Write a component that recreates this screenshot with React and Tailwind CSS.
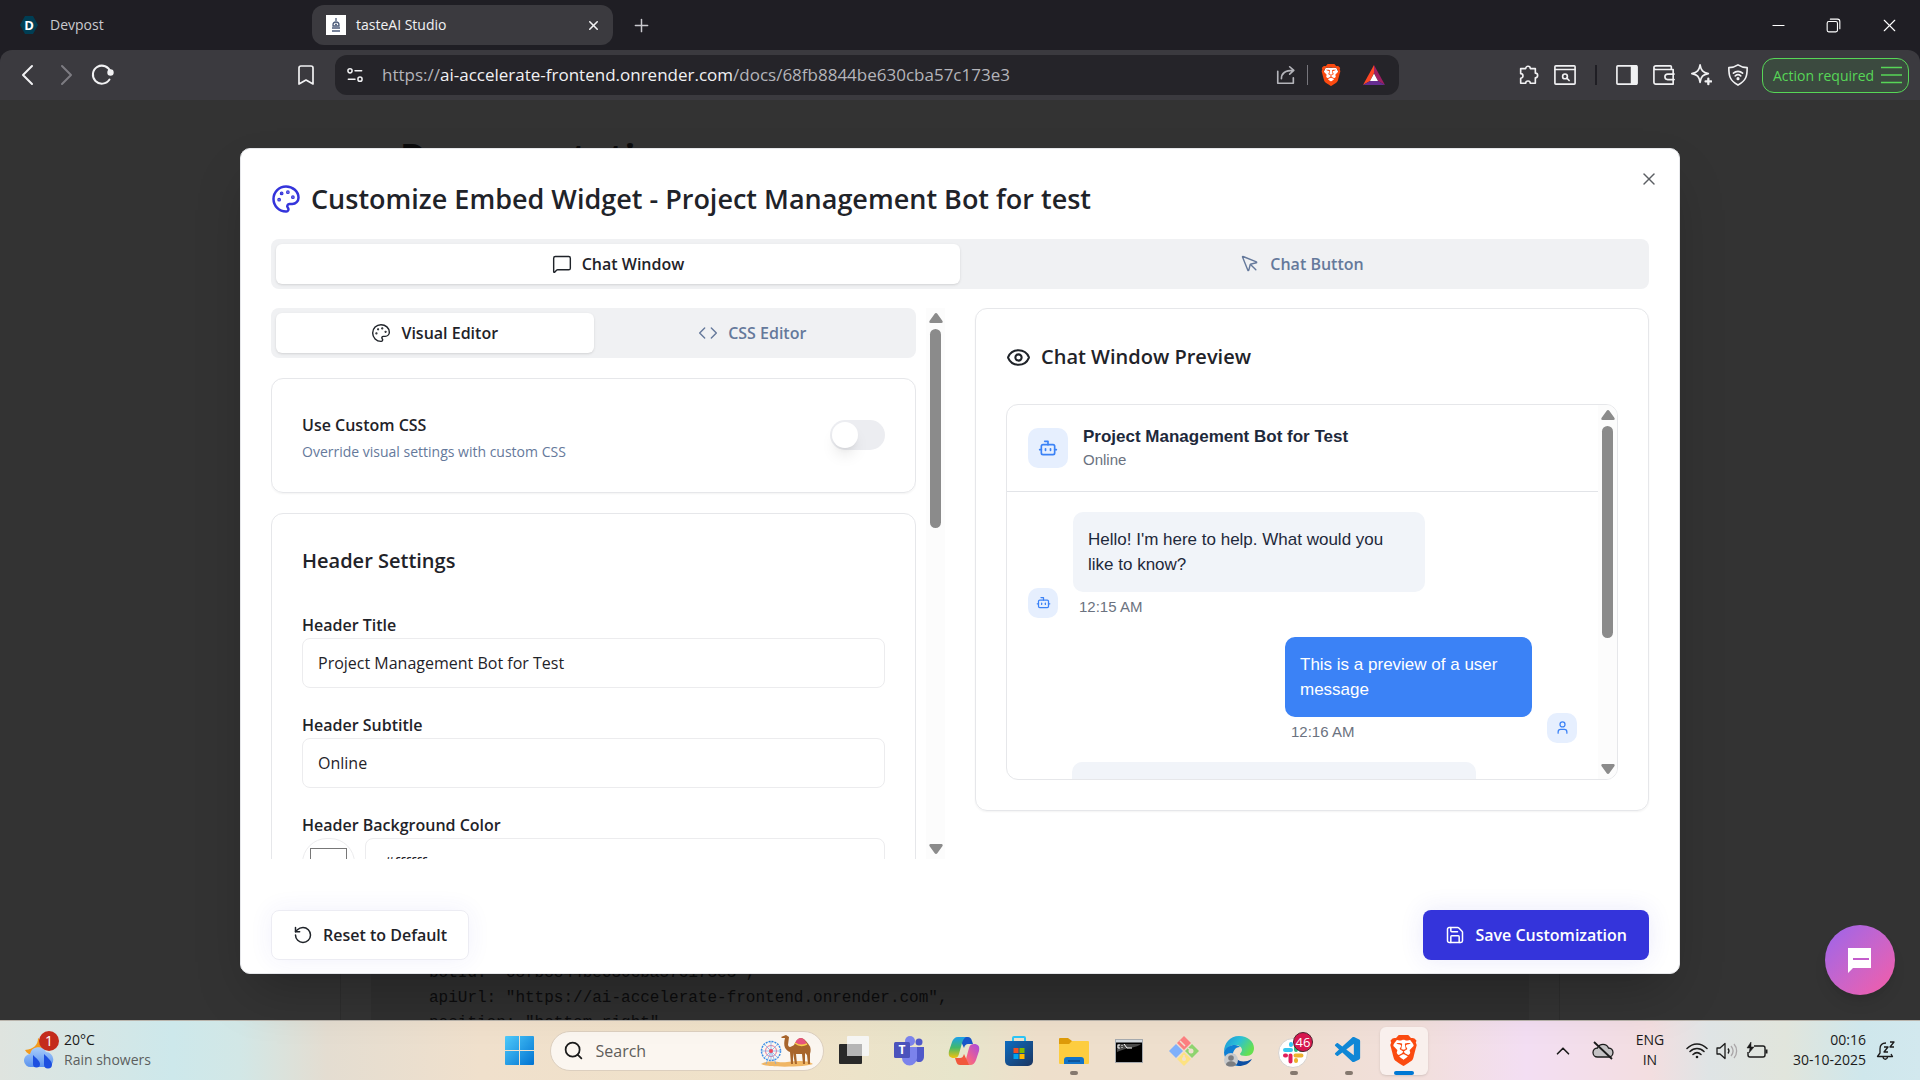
import {
  Bookmark,
  Bot,
  ChevronUp,
  Code,
  Eye,
  MessageSquare,
  Minus,
  MousePointer,
  Palette,
  Plus,
  RotateCcw,
  Save,
  Search,
  User,
  X,
} from 'lucide-react'
import { SiBrave } from 'react-icons/si'
import { VscVscode } from 'react-icons/vsc'

/* ---------- Browser chrome icons ---------- */

function ChromeIcon({ children, size = 22, className = '' }) {
  return (
    <svg
      width={size}
      height={size}
      viewBox="0 0 24 24"
      fill="none"
      stroke="currentColor"
      strokeWidth="1.8"
      strokeLinecap="round"
      strokeLinejoin="round"
      className={`shrink-0 ${className}`}
    >
      {children}
    </svg>
  )
}

function BraveLogo({ size }) {
  return (
    <span className="grid place-items-center">
      <svg width={size} height={size} viewBox="0 0 24 24" className="col-start-1 row-start-1">
        <path d="M6 4h12l2 5-2.500 9L12 22l-5.500-4L4 9z" fill="#fff" />
      </svg>
      <SiBrave size={size} className="col-start-1 row-start-1 text-[#fb4a10]" />
    </span>
  )
}

function BatLogo() {
  return (
    <svg width="22" height="20" viewBox="0 0 22 20">
      <path d="M11 0 0 20l7-4 4-8z" fill="#ff4724" />
      <path d="M11 0v8l4 8 7 4z" fill="#9e1f63" />
      <path d="M0 20h22l-7-4H7z" fill="#662d91" />
      <path d="M11 8.500 7 16h8z" fill="#fff" />
    </svg>
  )
}

function TabStrip() {
  return (
    <div className="flex h-[50px] items-center text-[14px] text-[#c9c9ce]">
      <div className="flex w-[312px] items-center gap-3 pl-5">
        <svg width="18" height="18" viewBox="0 0 18 18">
          <path d="M5 0h8l5 9-5 9H5L0 9z" fill="#003e54" />
          <text x="9" y="14" textAnchor="middle" fontSize="13" fontWeight="700" fill="#fff">
            D
          </text>
        </svg>
        <span className="pb-0.5">Devpost</span>
      </div>
      <div className="flex h-10 w-[301px] items-center rounded-xl bg-[#3b3a3f] pl-3.5 pr-3 text-[#f1f1f3]">
        <svg width="20" height="20" viewBox="0 0 20 20">
          <rect width="20" height="20" fill="#fff" />
          <path d="M10 3v3M7 10a3 3 0 1 1 6 0v1H7zM6 13h8M6 16h8" stroke="#4b5a78" fill="none" strokeWidth="1.300" />
          <circle cx="10" cy="9.500" r="1" fill="#4b5a78" />
        </svg>
        <span className="ml-2.5 flex-1 pb-0.5">tasteAI Studio</span>
        <button type="button" aria-label="Close tab">
          <X size={15} strokeWidth={2.5} />
        </button>
      </div>
      <button type="button" aria-label="New tab" className="ml-[18px]">
        <Plus size={21} strokeWidth={1.7} />
      </button>
      <div className="ml-auto flex items-center gap-9 pr-5 text-white">
        <button type="button" aria-label="Minimize">
          <Minus size={19} strokeWidth={1.4} />
        </button>
        <button type="button" aria-label="Restore">
          <ChromeIcon size={19}>
            <rect x="4" y="7" width="13" height="13" rx="2" strokeWidth="1.400" />
            <path d="M8 4h9a3 3 0 0 1 3 3v9" strokeWidth="1.400" />
          </ChromeIcon>
        </button>
        <button type="button" aria-label="Close">
          <X size={21} strokeWidth={1.3} />
        </button>
      </div>
    </div>
  )
}

function Toolbar() {
  return (
    <div className="flex h-[50px] items-center rounded-t-xl bg-[#3b3a3f] pr-[11px] text-[#f1f1f3]">
      <div className="flex w-[335px] shrink-0 items-center pl-4 pr-[17px]">
        <button type="button" aria-label="Back">
          <ChromeIcon size={24}>
            <path d="m16 3-9 9 9 9" strokeWidth="2" />
          </ChromeIcon>
        </button>
        <button type="button" aria-label="Forward" className="ml-3.5 text-[#7d7c82]">
          <ChromeIcon size={24}>
            <path d="m8 3 9 9-9 9" strokeWidth="2" />
          </ChromeIcon>
        </button>
        <button type="button" aria-label="Reload" className="ml-3">
          <ChromeIcon size={24}>
            <path d="M19.500 16.500A9 9 0 1 1 20.500 9" strokeWidth="2" />
            <circle cx="20.500" cy="9.500" r="2.300" fill="currentColor" />
          </ChromeIcon>
        </button>
        <button type="button" aria-label="Bookmark" className="ml-auto">
          <Bookmark size={24} strokeWidth={1.7} />
        </button>
      </div>

      <div className="mr-[118px] flex h-10 min-w-0 flex-1 items-center rounded-xl bg-[#252429] pl-2.5 pr-3.5">
        <ChromeIcon size={20}>
          <circle cx="6" cy="7" r="2.500" />
          <path d="M12 7h8M4 17h8" />
          <circle cx="18" cy="17" r="2.500" />
        </ChromeIcon>
        <span className="ml-[17px] min-w-0 flex-1 truncate text-[17px] leading-6 text-[#b4b4ba]">
          https://<span className="text-[#f1f1f3]">ai-accelerate-frontend.onrender.com</span>
          /docs/68fb8844be630cba57c173e3
        </span>
        <ChromeIcon className="text-[#b4b4ba]">
          <path d="M3 8v13h17v-6" />
          <path d="M7 16c0-6 4-9 13-9M16 3l4.500 4L16 11" />
        </ChromeIcon>
        <span className="ml-2.5 h-5 w-px bg-[#77767c]" />
        <span className="ml-3">
          <BraveLogo size={22} />
        </span>
        <span className="ml-[21px]">
          <BatLogo />
        </span>
      </div>

      <div className="flex shrink-0 items-center gap-[15px]">
        <ChromeIcon>
          <path d="M9.500 5a2.500 2.500 0 0 1 5 0H20v5a2.500 2.500 0 0 1 0 5v6h-5.500a2.500 2.500 0 0 0-5 0H4v-5.500a2.500 2.500 0 0 0 0-5V5z" />
        </ChromeIcon>
        <ChromeIcon>
          <rect x="1" y="2" width="22" height="20" rx="1" />
          <path d="M1 6h22" />
          <circle cx="12" cy="13.500" r="2.600" />
          <path d="m14 15.500 2.500 2.500" />
        </ChromeIcon>
        <span className="mx-1 h-5 w-0.5 bg-[#1f1e24]" />
        <ChromeIcon>
          <rect x="1" y="2" width="22" height="20" rx="1" />
          <path d="M17 2h5v20h-5z" fill="currentColor" />
        </ChromeIcon>
        <ChromeIcon>
          <path d="M20 6V3a1 1 0 0 0-1-1H3a2 2 0 0 0 0 4h19v16H3a2 2 0 0 1-2-2V4" />
          <path d="M23 11h-7a3 3 0 0 0 0 6h7" />
        </ChromeIcon>
        <ChromeIcon>
          <path d="M11 1c1 6 3 8 9 9.500-6 1-8 3-9 9.500-1-6.500-3-8.500-9-9.500C8 9 10 7 11 1z" />
          <path d="M20 16v6M17 19h6" strokeWidth="2.500" />
        </ChromeIcon>
        <ChromeIcon>
          <path d="M12 1c3 2 6 3 10 3 0 9-1 14-10 19C3 18 2 13 2 4c4 0 7-1 10-3z" />
          <path d="M7 10a7.500 7.500 0 0 1 10 0M9 13a4.500 4.500 0 0 1 6 0" />
          <circle cx="12" cy="16" r=".8" fill="currentColor" />
        </ChromeIcon>
        <button
          type="button"
          className="-ml-0.5 flex h-[35px] w-[147px] items-center justify-between rounded-xl border border-[#57d657] bg-[#3b4a3f] pl-2.5 pr-1.5 text-[14px] whitespace-nowrap text-[#57d657]"
        >
          Action required
          <svg width="21" height="18" viewBox="0 0 21 18" stroke="currentColor" strokeWidth="1.600">
            <path d="M0 1.500h21M0 9h21M0 16.500h21" />
          </svg>
        </button>
      </div>
    </div>
  )
}

/* ---------- Page behind the dialog ---------- */

function DocsPage() {
  return (
    <main className="flex h-full justify-center overflow-hidden pr-5">
      <div className="flex w-full max-w-[1220px] flex-col">
        <h1 className="px-[60px] pt-8 text-[36px] leading-[50px] font-bold text-[#0b0b0c]">Documentation</h1>
        <div className="mt-10 -mb-4 flex flex-1 flex-col justify-end border-x border-[#2d2d2d] px-[30px]">
          <pre className="bg-[#2f2f2f] px-[58px] pt-5 font-['Liberation_Mono',monospace] text-[16px] leading-[25px] text-[#0c0c0d]">
            {`botId: "68fb8844be630cba57c173e3",
apiUrl: "https://ai-accelerate-frontend.onrender.com",
position: "bottom-right",`}
          </pre>
        </div>
      </div>
    </main>
  )
}

/* ---------- Dialog ---------- */

function TabButton({ icon: Icon, label, active }) {
  return (
    <button
      type="button"
      role="tab"
      aria-selected={active}
      className={`flex flex-1 items-center justify-center gap-2.5 rounded-md text-[16px] font-semibold ${
        active ? 'bg-white text-[#1f2329] shadow-sm' : 'text-[#65799b]'
      }`}
    >
      <Icon size={20} strokeWidth={1.7} />
      {label}
    </button>
  )
}

function TabBar({ tabs }) {
  return (
    <div role="tablist" className="flex h-[50px] shrink-0 rounded-lg bg-[#f0f1f3] p-[5px]">
      {tabs.map((tab) => (
        <TabButton key={tab.label} {...tab} />
      ))}
    </div>
  )
}

function ScrollBar({ thumb }) {
  return (
    <div className="flex w-[19px] shrink-0 flex-col items-center bg-[#fcfcfc] py-[5px] text-[#8b8b8b]">
      <svg width="14" height="10" viewBox="0 0 14 10" fill="currentColor">
        <path d="M7 0c.6 0 1 .3 1.300.8L13.500 8c.5 1 .1 2-1 2h-11c-1.100 0-1.500-1-1-2L5.700.8C6 .3 6.400 0 7 0z" />
      </svg>
      <div className="mt-1.5 w-full flex-1 px-1">
        <div className={`rounded-full bg-[#8b8b8b] ${thumb}`} />
      </div>
      <svg width="14" height="10" viewBox="0 0 14 10" fill="currentColor">
        <path d="M7 10c.6 0 1-.3 1.300-.8L13.500 2c.5-1 .1-2-1-2h-11C.4 0 0 1 .5 2l5.200 7.200c.3.5.7.8 1.300.8z" />
      </svg>
    </div>
  )
}

function TextField({ id, label, value }) {
  return (
    <div className="flex flex-col">
      <label htmlFor={id} className="text-[16px] leading-[25px] font-semibold">
        {label}
      </label>
      <input
        id={id}
        type="text"
        defaultValue={value}
        className="h-[50px] rounded-lg border border-[#ececee] px-[15px] text-[16px]"
      />
    </div>
  )
}

function EditorPane() {
  return (
    <div className="flex min-h-0 flex-1 gap-2.5 overflow-hidden">
      <div className="flex min-w-0 flex-1 flex-col gap-5 overflow-hidden">
        <TabBar
          tabs={[
            { icon: Palette, label: 'Visual Editor', active: true },
            { icon: Code, label: 'CSS Editor', active: false },
          ]}
        />

        <div className="flex h-[115px] shrink-0 items-center justify-between rounded-xl border border-[#e6e7ea] px-[30px] shadow-xs">
          <div className="flex flex-col pt-1.5">
            <label htmlFor="use-custom-css" className="text-[16px] leading-[27px] font-semibold">
              Use Custom CSS
            </label>
            <p className="text-[14px] leading-[25px] text-[#65799b]">Override visual settings with custom CSS</p>
          </div>
          <input
            id="use-custom-css"
            type="checkbox"
            role="switch"
            className="h-[30px] w-[55px] appearance-none rounded-full bg-[#ecedf1] p-0.5 before:block before:size-[26px] before:rounded-full before:bg-white before:shadow-lg"
          />
        </div>

        <div className="flex shrink-0 flex-col rounded-xl border border-[#e6e7ea] px-[30px] pt-[30px] pb-[30px]">
          <h3 className="text-[20px] leading-[34px] font-semibold">Header Settings</h3>
          <div className="mt-[35px] flex flex-col gap-[25px]">
            <TextField id="header-title" label="Header Title" value="Project Management Bot for Test" />
            <TextField id="header-subtitle" label="Header Subtitle" value="Online" />
            <div className="flex flex-col">
              <label htmlFor="header-bg" className="text-[16px] leading-[25px] font-semibold">
                Header Background Color
              </label>
              <div className="flex gap-2.5">
                <input
                  id="header-bg"
                  type="color"
                  defaultValue="#ffffff"
                  className="h-[50px] w-[53px] rounded-full border border-[#ececee] bg-white p-[5px]"
                />
                <input
                  type="text"
                  aria-label="Header background hex"
                  defaultValue="#ffffff"
                  className="h-[50px] min-w-0 flex-1 rounded-lg border border-[#ececee] px-[18px] text-[16px]"
                />
              </div>
            </div>
          </div>
        </div>
      </div>
      <ScrollBar thumb="h-[199px]" />
    </div>
  )
}

function Avatar({ icon: Icon, large }) {
  return (
    <span
      className={`grid shrink-0 place-items-center rounded-[10px] bg-[#e6effe] text-[#3b82f6] ${
        large ? 'size-10' : 'size-[30px]'
      }`}
    >
      <Icon size={large ? 20 : 15} />
    </span>
  )
}

function ChatPreview() {
  return (
    <div className="flex h-[376px] overflow-hidden rounded-xl border border-[#e6e7ea] font-['Liberation_Sans',Arial,sans-serif]">
      <div className="flex min-w-0 flex-1 flex-col overflow-hidden">
        <div className="flex h-[87px] shrink-0 items-center gap-[15px] border-b border-[#e2e4e8] px-[21px]">
          <Avatar icon={Bot} large />
          <div>
            <div className="text-[17px] leading-6 font-bold text-[#1e293b]">Project Management Bot for Test</div>
            <div className="text-[15px] leading-[22px] text-[#6b7280]">Online</div>
          </div>
        </div>

        <div className="flex flex-col gap-[19px] px-[21px] pt-5">
          <div className="flex items-end gap-[15px]">
            <Avatar icon={Bot} />
            <div>
              <p className="w-[352px] rounded-[10px] bg-[#f1f4f9] px-[15px] py-[15px] text-[17px] leading-[25px] text-[#1e293b]">
                Hello! I'm here to help. What would you like to know?
              </p>
              <p className="mt-1 pl-1.5 text-[15px] leading-[22px] text-[#6b7280]">12:15 AM</p>
            </div>
          </div>

          <div className="flex items-end justify-end gap-[15px]">
            <div>
              <p className="w-[247px] rounded-[10px] bg-[#3b82f6] px-[15px] py-[15px] text-[17px] leading-[25px] text-white">
                This is a preview of a user message
              </p>
              <p className="mt-1 pl-1.5 text-[15px] leading-[22px] text-[#6b7280]">12:16 AM</p>
            </div>
            <Avatar icon={User} />
          </div>

          <div className="ml-[44px] h-20 w-[404px] rounded-[10px] bg-[#f1f4f9]" />
        </div>
      </div>
      <ScrollBar thumb="h-[212px]" />
    </div>
  )
}

function CustomizeDialog() {
  return (
    <div
      role="dialog"
      aria-labelledby="dialog-title"
      className="relative flex h-[90%] w-3/4 flex-col rounded-[10px] border border-[#e6e7ea] bg-white px-[30px] pt-[30px] pb-[13px] text-[#1f2329] shadow-2xl"
    >
      <button type="button" aria-label="Close dialog" className="absolute top-5 right-5 text-[#5b5e63]">
        <X size={20} strokeWidth={1.7} />
      </button>

      <h2 id="dialog-title" className="flex h-10 shrink-0 items-center gap-2.5 text-[27px] font-semibold">
        <Palette size={30} className="text-[#3434db]" />
        Customize Embed Widget - Project Management Bot for test
      </h2>

      <div className="mt-5 flex flex-col">
        <TabBar
          tabs={[
            { icon: MessageSquare, label: 'Chat Window', active: true },
            { icon: MousePointer, label: 'Chat Button', active: false },
          ]}
        />
      </div>

      <div className="mt-[19px] grid min-h-0 flex-1 grid-cols-2 grid-rows-1 gap-[30px]">
        <div className="flex min-h-0">
          <EditorPane />
        </div>
        <section className="flex flex-col self-start rounded-xl border border-[#e6e7ea] p-[30px] shadow-xs">
          <h3 className="mb-7 flex h-[37px] items-center gap-2.5 text-[20px] font-semibold">
            <Eye size={25} />
            Chat Window Preview
          </h3>
          <ChatPreview />
        </section>
      </div>

      <div className="mt-[51px] flex shrink-0 items-center justify-between text-[16px] font-semibold">
        <button
          type="button"
          className="flex h-[50px] items-center gap-2.5 rounded-lg border border-[#ececf3] px-[21px] shadow-[0_0_24px_rgba(52,52,219,0.07)]"
        >
          <RotateCcw size={20} strokeWidth={1.8} />
          Reset to Default
        </button>
        <button
          type="button"
          className="flex h-[50px] items-center gap-2.5 rounded-lg bg-[#3434db] px-[22px] text-white shadow-[0_0_24px_rgba(52,52,219,0.1)]"
        >
          <Save size={20} strokeWidth={1.8} />
          Save Customization
        </button>
      </div>
    </div>
  )
}

/* ---------- Taskbar ---------- */

function WeatherIcon() {
  return (
    <svg width="36" height="38" viewBox="0 0 36 38">
      <defs>
        <linearGradient id="cloud" x1="0" y1="0" x2="0" y2="1">
          <stop offset="0" stopColor="#a9cdfb" />
          <stop offset="1" stopColor="#5b93ee" />
        </linearGradient>
      </defs>
      <path d="M14 7c0 7-4 11-13 12 3 6 12 7 16 1s1-11-3-13z" fill="#f39b1d" />
      <path d="M7 36a6.500 6.500 0 0 1-1-13 8.500 8.500 0 0 1 16-2 7.700 7.700 0 0 1 2 15z" fill="url(#cloud)" />
      <path d="M9 24c4 4 7 6 7 9a3.500 3.500 0 0 1-7 0zM20 23c4 4 8 7 8 10.500a4 4 0 0 1-8 0z" fill="#1d4fe0" />
      <circle cx="25" cy="10" r="10" fill="#c42b1c" />
      <text x="25" y="15" textAnchor="middle" fontSize="14" fill="#fff">
        1
      </text>
    </svg>
  )
}

function WindowsLogo() {
  return (
    <svg width="30" height="30" viewBox="0 0 30 30">
      <defs>
        <linearGradient id="win" x1="0" y1="0" x2="1" y2="1">
          <stop offset="0" stopColor="#4fcbfb" />
          <stop offset="1" stopColor="#0072d1" />
        </linearGradient>
      </defs>
      <path d="M0 1a1 1 0 0 1 1-1h13v14H0zM15 0h13a1 1 0 0 1 1 1v13H15zM0 15h14v14H1a1 1 0 0 1-1-1zM15 15h14v13a1 1 0 0 1-1 1H15z" fill="url(#win)" />
    </svg>
  )
}

function CamelArt() {
  return (
    <svg width="56" height="34" viewBox="0 0 56 34" fill="none">
      <path d="M2 30c8-5 16-1 26-2s20-2 26 2c-6 3-46 4-52 0z" fill="#f0b664" />
      <circle cx="12" cy="17" r="9.500" stroke="#3d8fe8" strokeWidth="1.500" strokeDasharray="2 1" />
      <circle cx="12" cy="17" r="5.500" stroke="#e9799a" />
      <path d="M12 7v20M2 17h20M5 10l14 14M19 10 5 24M12 17l-5 13M12 17l5 13" stroke="#6ea9ec" strokeWidth=".7" />
      <circle cx="12" cy="17" r="2" fill="#f0485e" />
      <path d="M22 3l5-2 3 2-1 8c1 3 3 2 6 0 2-4 4-7 7-7s6 4 8 7c2 2 2 6 1 9v10h-2l-1-9-2-2v11h-2l-1-10h-6l1 10h-2l-2-11v11h-2l-1-12c-5-2-7-6-5-14l-3 0z" fill="#a8652c" />
      <path d="M36 9c2-4 4-5 6-5s4 2 6 6c-4 2-8 2-12-1z" fill="#e8557e" />
      <path d="M36 9c4 3 8 3 12 1" stroke="#f7d04a" strokeWidth="1.500" />
    </svg>
  )
}

function TaskViewIcon() {
  return (
    <svg width="32" height="32" viewBox="0 0 32 32">
      <rect x="1" y="9" width="23" height="20" rx="1" fill="#292929" />
      <rect x="9" y="1" width="22" height="20" rx="1" fill="#f6f6f6" opacity=".95" />
      <path d="M9 9h15v12H9z" fill="#b5b5b5" />
    </svg>
  )
}

function TeamsIcon() {
  return (
    <svg width="32" height="32" viewBox="0 0 32 32">
      <circle cx="17" cy="6" r="5" fill="#7b83eb" />
      <circle cx="26" cy="7" r="3.500" fill="#5059c9" />
      <path d="M22 12h9v9c0 4-2 6-5 6s-4-2-4-5z" fill="#5059c9" />
      <path d="M9 12h15v11a7.500 7.500 0 0 1-15 0z" fill="#7b83eb" />
      <rect x="1" y="7" width="16" height="16" rx="1.500" fill="#4b53bc" />
      <text x="9" y="19" textAnchor="middle" fontSize="12" fontWeight="700" fill="#fff">
        T
      </text>
    </svg>
  )
}

function CopilotIcon() {
  return (
    <svg width="32" height="32" viewBox="0 0 32 32">
      <defs>
        <linearGradient id="cpl" x1="0" y1="0" x2="0" y2="1">
          <stop offset="0" stopColor="#1aa0ee" />
          <stop offset=".5" stopColor="#42b96a" />
          <stop offset="1" stopColor="#f4c20d" />
        </linearGradient>
        <linearGradient id="cpr" x1="1" y1="0" x2="0" y2="1">
          <stop offset="0" stopColor="#a64be0" />
          <stop offset=".6" stopColor="#f0608f" />
          <stop offset="1" stopColor="#fb8b4b" />
        </linearGradient>
      </defs>
      <path d="M11 2h9c2 0 3 1 4 4l1 3h-5c-2 0-3 1-4 4z" fill="#1756c9" />
      <path d="M10 2h8c-2 1-3 3-4 6l-3 11c-1 3-2 4-5 4-4 0-6-2-5-7l3-9c1-3 3-5 6-5z" fill="url(#cpl)" />
      <path d="M22 30h-8c2-1 3-3 4-6l3-11c1-3 2-4 5-4 4 0 6 2 5 7l-3 9c-1 3-3 5-6 5z" fill="url(#cpr)" />
      <path d="M21 30h-9c-2 0-3-1-4-4l-1-3h5c2 0 3-1 4-4z" fill="#f1583c" />
    </svg>
  )
}

function StoreIcon() {
  return (
    <svg width="32" height="32" viewBox="0 0 32 32">
      <defs>
        <linearGradient id="store" x1="0" y1="0" x2="1" y2="1">
          <stop offset="0" stopColor="#0d6cc0" />
          <stop offset="1" stopColor="#1c3560" />
        </linearGradient>
      </defs>
      <path d="M10 7V3a1 1 0 0 1 1-1h10a1 1 0 0 1 1 1v4" fill="none" stroke="#2bc3f5" strokeWidth="2" />
      <path d="M2 6h28v20a5 5 0 0 1-5 5H7a5 5 0 0 1-5-5z" fill="url(#store)" />
      <path d="M10.500 13h5v5h-5z" fill="#f25022" />
      <path d="M16.500 13h5v5h-5z" fill="#7fba00" />
      <path d="M10.500 19h5v5h-5z" fill="#00a4ef" />
      <path d="M16.500 19h5v5h-5z" fill="#ffb900" />
    </svg>
  )
}

function ExplorerIcon() {
  return (
    <svg width="32" height="32" viewBox="0 0 32 32">
      <path d="M1 10V4a1 1 0 0 1 1-1h8l4 3v4z" fill="#dd9a08" />
      <path d="M1 9h10l3-3h16a1 1 0 0 1 1 1v21a1 1 0 0 1-1 1H2a1 1 0 0 1-1-1z" fill="#fdcd3f" />
      <path d="M6 29v-4a3 3 0 0 1 3-3h14a3 3 0 0 1 3 3v4z" fill="#1173c9" />
      <path d="M10 26h12" stroke="#0a4a8c" strokeWidth="1.500" />
    </svg>
  )
}

function TerminalIcon() {
  return (
    <svg width="28" height="24" viewBox="0 0 28 24">
      <rect x=".5" y=".5" width="27" height="23" fill="#000" stroke="#a5a9ad" />
      <path d="M1 1h26v2.500H1z" fill="#d4d9de" />
      <path d="M2 5h24c-4 4-14 3-24 8z" fill="#4a4a4a" />
      <path d="M5 6H3v3h2M7 6v1M7 8v1M9 5l3 4M12 9h5" stroke="#fff" fill="none" />
    </svg>
  )
}

function GitIcon() {
  return (
    <svg width="32" height="32" viewBox="0 0 32 32">
      <path d="m16 1 7 7-7 7-7-7z" fill="#fb7f80" />
      <path d="m8 9 7 7-7 7-7-7z" fill="#7fb0fb" />
      <path d="m24 9 7 7-7 7-7-7z" fill="#8ed46f" />
      <path d="m16 17 7 7-7 7-7-7z" fill="#fde281" />
      <path d="m12 6 5 5M16 20v5M20 13l4 3" stroke="#efe0d0" strokeWidth="1.500" />
      <circle cx="16" cy="24" r="2" fill="#efe0d0" />
      <circle cx="23" cy="16" r="2.500" fill="#efe0d0" />
    </svg>
  )
}

function EdgeIcon() {
  return (
    <svg width="32" height="32" viewBox="0 0 32 32">
      <defs>
        <linearGradient id="edge" x1="0" y1="0" x2="1" y2=".5">
          <stop offset="0" stopColor="#1b8fd9" />
          <stop offset=".5" stopColor="#2bc0d6" />
          <stop offset="1" stopColor="#66e04f" />
        </linearGradient>
      </defs>
      <path d="M1 17C1 8 7 1 16 1s15 6 15 12c0 5-3 8-8 8-4 0-6-1-6-2s2-2 2-4c0-3-3-5-7-5-5 0-9 3-11 7z" fill="url(#edge)" />
      <path d="M1 17c2-5 6-7 11-7 2 0 4 1 5 2-5 0-8 5-7 10s5 8 8 9C8 32 1 25 1 17z" fill="#0f7fd4" />
      <path d="M12 19c0 7 8 10 17 5-3 5-8 7-13 7-5-1-7-8-4-12z" fill="#0c4fa3" />
      <circle cx="8" cy="25" r="7" fill="#c9cbcd" />
      <circle cx="8" cy="23" r="2.800" fill="#7b7d80" />
      <path d="M3 30c0-5 10-5 10 0-3 2-7 2-10 0z" fill="#7b7d80" />
    </svg>
  )
}

function SlackIcon() {
  return (
    <svg width="38" height="38" viewBox="0 0 38 38">
      <circle cx="18" cy="21" r="14.500" fill="#fff" stroke="#d7d3d0" />
      <g strokeWidth="4" strokeLinecap="round">
        <path d="M10 18h6M16 12v1" stroke="#36c5f0" />
        <path d="M21 12v6M27 18h-1" stroke="#2eb67d" />
        <path d="M20.500 23.500h6M21 29v-1" stroke="#ecb22e" />
        <path d="M15.500 23.500v6M10 23.500h1" stroke="#e01e5a" />
      </g>
      <circle cx="28" cy="10" r="9.500" fill="#d6174e" stroke="#4b2430" />
      <text x="28" y="15" textAnchor="middle" fontSize="13" fill="#fff">
        46
      </text>
    </svg>
  )
}

const taskbarApps = [
  { name: 'Task View', icon: <TaskViewIcon /> },
  { name: 'Teams', icon: <TeamsIcon /> },
  { name: 'Copilot', icon: <CopilotIcon /> },
  { name: 'Microsoft Store', icon: <StoreIcon /> },
  { name: 'File Explorer', icon: <ExplorerIcon />, running: true },
  { name: 'Terminal', icon: <TerminalIcon /> },
  { name: 'Git', icon: <GitIcon /> },
  { name: 'Edge', icon: <EdgeIcon /> },
  { name: 'Slack', icon: <SlackIcon />, running: true },
  { name: 'VS Code', icon: <VscVscode size={31} color="#0f87d6" />, running: true },
  { name: 'Brave', icon: <BraveLogo size={31} />, active: true },
]

function TaskbarApp({ name, icon, running, active }) {
  return (
    <button
      type="button"
      aria-label={name}
      className={`relative grid size-12 shrink-0 place-items-center rounded-md ${active ? 'bg-[#f9f0ed] shadow-sm' : ''}`}
    >
      {icon}
      {running && <span className="absolute bottom-0 h-1 w-2 rounded-full bg-[#85796f]" />}
      {active && <span className="absolute bottom-0 h-1 w-5 rounded-full bg-[#0078d4]" />}
    </button>
  )
}

function Tray() {
  return (
    <div className="flex flex-1 items-center justify-end pr-6 text-[14px] leading-5 text-[#1b1b1b]">
      <ChevronUp size={22} strokeWidth={1.8} />
      <svg width="22" height="20" viewBox="0 0 22 20" className="ml-[18px]" fill="none" stroke="currentColor" strokeWidth="1.300">
        <path d="M5.500 16a4.500 4.500 0 0 1 0-9 6 6 0 0 1 11 0 4.500 4.500 0 0 1 0 9z" fill="#c4c2c4" />
        <path d="m2 1 18 17" strokeWidth="1.800" />
      </svg>
      <div className="ml-[18px] w-9 pb-0.5 text-center">
        ENG
        <br />
        IN
      </div>
      <svg width="22" height="16" viewBox="0 0 22 16" className="ml-[18px]" fill="none" stroke="currentColor" strokeWidth="1.500" strokeLinecap="round">
        <path d="M1 5.500C7-.5 15-.5 21 5.500M4 8.500c4-4 10-4 14 0M7 11.500c2.500-2.300 5.500-2.300 8 0" />
        <circle cx="11" cy="14" r="1.300" fill="currentColor" stroke="none" />
      </svg>
      <svg width="22" height="18" viewBox="0 0 22 18" className="ml-2" fill="none" stroke="currentColor" strokeWidth="1.300" strokeLinejoin="round">
        <path d="M1 6h3l5-4.500v15L4 12H1zM12 6.500c1.200 1.500 1.200 3.500 0 5" />
        <path d="M15 4c2.500 3 2.500 7 0 10M18 2c3.500 4 3.500 10 0 14" stroke="#aaa6a8" />
      </svg>
      <svg width="22" height="18" viewBox="0 0 22 18" className="ml-2" fill="none" stroke="currentColor" strokeWidth="1.400">
        <path d="M8 4h9a2 2 0 0 1 2 2v7a2 2 0 0 1-2 2H4a2 2 0 0 1-2-2V10" />
        <path d="M20.500 7.500v4" strokeWidth="2" />
        <path d="M5 0 1 6h3L3 11l5-6H5z" fill="currentColor" strokeWidth=".5" />
      </svg>
      <div className="ml-[25px] pb-0.5 text-right">
        00:16
        <br />
        30-10-2025
      </div>
      <svg width="20" height="20" viewBox="0 0 20 20" className="ml-2.5" fill="none" stroke="currentColor" strokeWidth="1.300" strokeLinejoin="round">
        <path d="M10 2C6 2 4 4.500 4 8v4l-2.500 3.500h15L15 13M7 16c.5 3 4 3 4.500 0" />
        <path d="M8 6h4l-4 5h4M14 1h4l-4 5h4" />
      </svg>
    </div>
  )
}

function Taskbar() {
  return (
    <footer className="flex h-[60px] shrink-0 items-center border-t border-[#b9b4ac] bg-[linear-gradient(90deg,#dfe4df_0%,#cde8eb_9%,#d2e7e6_12.5%,#e4ddd1_17%,#f0e0cc_25%,#efe2c8_42%,#e7e5cb_50%,#eedfcb_54%,#eedfcf_66%,#f2dfdc_74%,#f3def3_79.5%,#f3dee0_86%,#dfe4e5_89%,#e1e5dc_93%,#cfe7ec_97%,#d2e8ee_100%)]">
      <div className="flex flex-1 items-center gap-1 pb-0.5 pl-6 text-[14px] leading-5">
        <WeatherIcon />
        <div className="text-[#1b1b1b]">
          20°C
          <br />
          <span className="text-[#5c5f5e]">Rain showers</span>
        </div>
      </div>

      <div className="flex shrink-0 items-center pl-3">
        <button type="button" aria-label="Start">
          <WindowsLogo />
        </button>
        <label className="ml-[15px] flex h-10 w-[274px] items-center rounded-full border border-[#dccfbf] bg-[#fbf6f0] pr-2 pl-3">
          <Search size={21} className="text-[#1b1b1b]" />
          <input
            type="search"
            aria-label="Search"
            placeholder="Search"
            className="ml-3 min-w-0 flex-1 text-[16px] placeholder:text-[#5f5d5a]"
          />
          <CamelArt />
        </label>
        <div className="ml-1.5 flex gap-[7px]">
          {taskbarApps.map((app) => (
            <TaskbarApp key={app.name} {...app} />
          ))}
        </div>
      </div>

      <Tray />
    </footer>
  )
}

export default function App() {
  return (
    <div className="flex h-screen flex-col overflow-hidden bg-[#1f1e24] font-['Open_Sans','Noto_Sans',sans-serif]">
      <header className="shrink-0">
        <TabStrip />
        <Toolbar />
      </header>

      <div className="relative min-h-0 flex-1 bg-[#333333]">
        <DocsPage />
        {/* Modal layer */}
        <div className="absolute inset-0 flex items-center justify-center pt-0.5">
          <CustomizeDialog />
        </div>
        {/* Chat launcher */}
        <button
          type="button"
          aria-label="Open chat"
          className="absolute right-[25px] bottom-[25px] grid size-[70px] place-items-center rounded-full bg-linear-to-br from-[#9a63ec] to-[#f65aa6] shadow-lg"
        >
          <svg width="24" height="26" viewBox="0 0 24 26">
            <path d="M0 1h23v20H5l-5 5z" fill="#fff" />
            <path d="M5 12h16" stroke="#c45ccb" strokeWidth="2" />
          </svg>
        </button>
      </div>

      <Taskbar />
    </div>
  )
}
